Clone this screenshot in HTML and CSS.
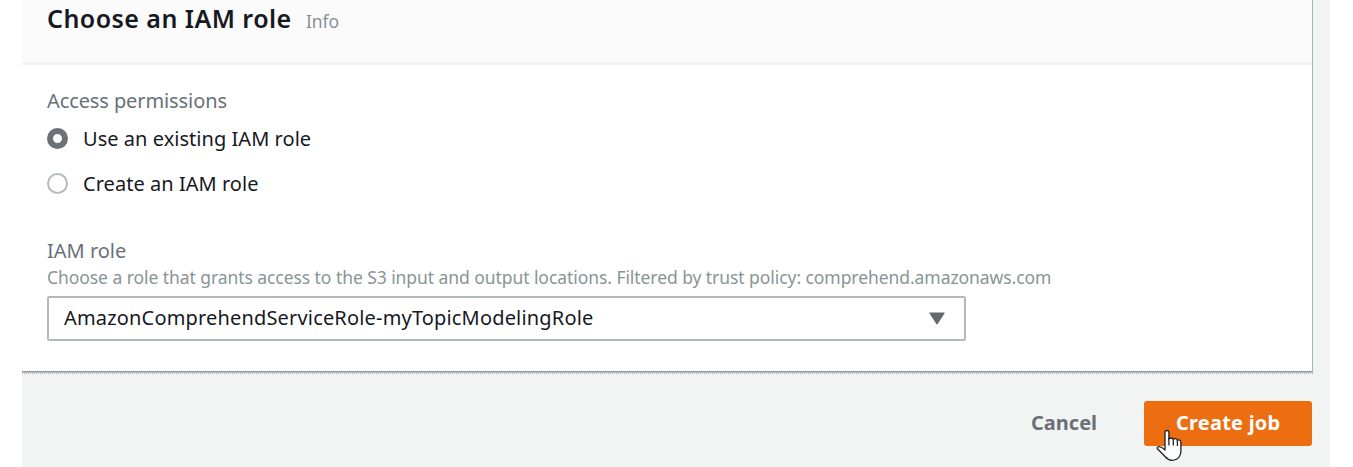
FILE: index.html
```html
<!DOCTYPE html>
<html lang="en">
<head>
<meta charset="utf-8">
<title>Choose an IAM role</title>
<link rel="stylesheet" href="styles.css">
</head>
<body>
<main class="page">
  <section class="panel">
    <header class="panel-header">
      <h2 class="title">Choose an IAM role</h2>
      <a class="info">Info</a>
    </header>
    <div class="panel-body">
      <div class="label access">Access permissions</div>
      <div class="option"><span class="radio checked"></span><span class="option-text">Use an existing IAM role</span></div>
      <div class="option"><span class="radio"></span><span class="option-text">Create an IAM role</span></div>
      <div class="label role-label">IAM role</div>
      <div class="hint">Choose a role that grants access to the S3 input and output locations. Filtered by trust policy: comprehend.amazonaws.com</div>
      <div class="select">
        <span class="select-value">AmazonComprehendServiceRole-myTopicModelingRole</span>
        <svg class="caret" width="16" height="13" viewBox="0 0 16 13"><path d="M1 .5h14q1 0 .5 1L8.600 12q-.6 1-1.200 0L.5 1.500Q0 .5 1 .5z" fill="#65686d"/></svg>
      </div>
    </div>
  </section>
  <footer class="actions">
    <span class="cancel">Cancel</span>
    <div class="create"><span class="create-job">Create job</span>
      <svg class="cursor" width="26" height="33" viewBox="0 0 26 33"><path d="M9 20V3.500Q9 1.500 10.900 1.500t2 2V10q.3-1 2-1 2.300 0 2.500 1.700.3-1.200 2-1 2 .2 2 1.800.4-.8 1.700-.6 1.800.3 1.800 2.300V22q0 3-1.500 5.500Q21 31.300 16 31.300q-4-.3-7-3.800L1.200 19.500Q1 17.300 4 17.800q2 .2 5 3.200z" fill="#fff" stroke="#222" stroke-width="1.300" stroke-linejoin="round"/><path d="M12.900 9v7.500M17.300 10v6.500M21.400 11v6" stroke="#222" stroke-width="1.300"/></svg>
    </div>
  </footer>
</main>
</body>
</html>
```

FILE: styles.css
```css
* { box-sizing: border-box; }
body { margin: 0; background: #fff; font-family: "Noto Sans", sans-serif; color: #16191f; overflow: hidden; }
.page { width: 1308px; height: 467px; margin-left: 22px; background: #f2f4f4; }
.panel { width: 1291px; height: 374px; background: #fff; border-right: 1px solid #aab7b8; border-bottom: 1px dotted #aab7b8; box-shadow: inset 0 -1px #b4bfc1, inset 0 -2px #8b999d; }
.panel-header { height: 65px; display: flex; align-items: flex-start; padding-left: 25px; background: #fbfbfb; border-bottom: 3px solid #f1f3f3; white-space: nowrap; }
.title { margin: 0; font-size: 25px; line-height: 36px; font-weight: 600; letter-spacing: .45px; width: 259px; }
.info { font-size: 17.500px; line-height: 43px; letter-spacing: -.1px; color: #879196; }
.panel-body { padding: 21px 0 0 25px; white-space: nowrap; font-size: 20px; }
.label { line-height: 30px; color: #687078; }
.access { letter-spacing: -.1px; }
.option { display: flex; align-items: center; height: 45px; }
.option-text { letter-spacing: .04px; }
.radio { width: 21px; height: 21px; border: 2px solid #b3bcbf; border-radius: 50%; margin-right: 15px; }
.radio.checked { border: 6px solid #6b7177; }
.role-label { margin-top: 30px; }
.hint { font-size: 17.500px; line-height: 22px; letter-spacing: -.065px; color: #879596; }
.select { width: 919px; height: 45px; margin-top: 8px; padding: 0 19px 0 15px; border: 2px solid #b0babc; border-radius: 2px; display: flex; align-items: center; justify-content: space-between; }
.select-value { letter-spacing: .17px; padding-bottom: 2px; }
.actions { display: flex; justify-content: flex-end; align-items: center; margin-top: 27px; padding-right: 18px; font-size: 20px; font-weight: 700; white-space: nowrap; }
.cancel { width: 113px; padding-bottom: 2px; color: #687078; }
.create { position: relative; width: 168px; height: 45px; display: flex; align-items: center; padding: 0 0 2px 32px; background: #ec6e11; border-radius: 3px; color: #fff; }
.create-job { letter-spacing: .22px; }
.cursor { position: absolute; left: 12px; top: 28px; }
```
